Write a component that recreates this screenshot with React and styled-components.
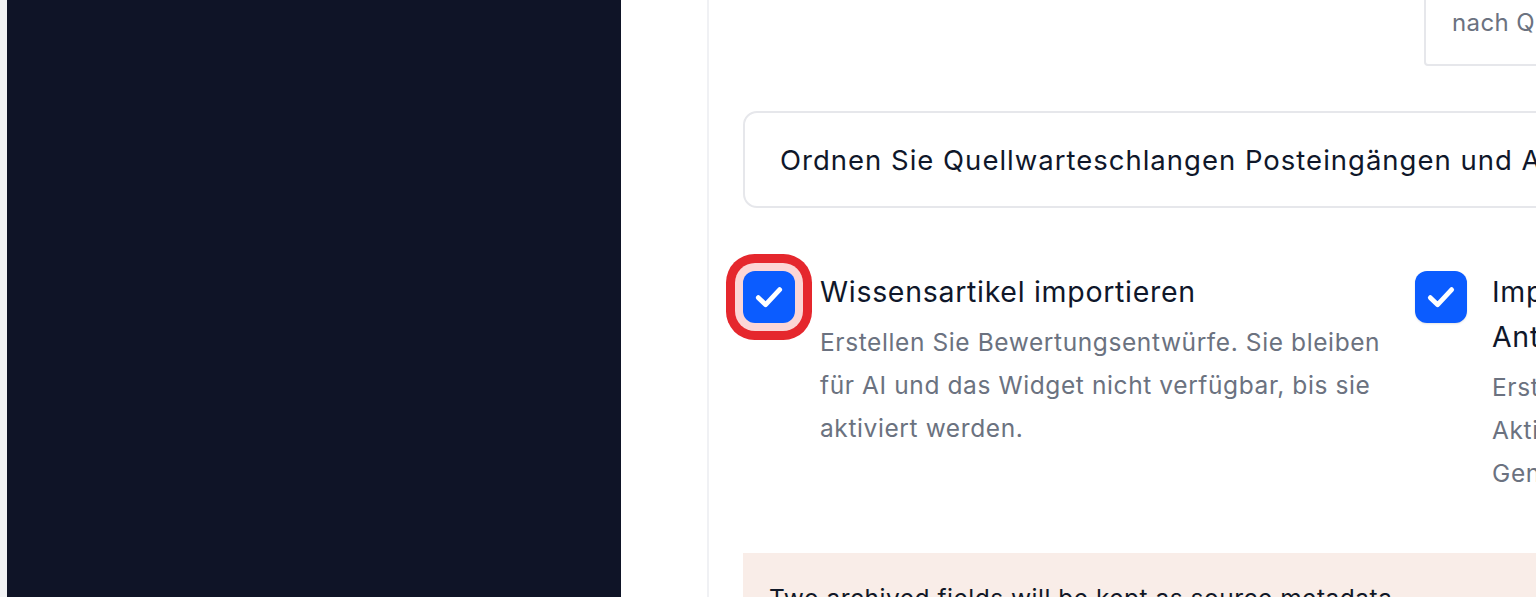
import React from 'react';
import styled, { createGlobalStyle } from 'styled-components';

const GlobalStyle = createGlobalStyle`
  html, body {
    margin: 0;
    padding: 0;
    height: 100%;
    overflow: hidden;
    background: #ffffff;
  }
  * { box-sizing: border-box; }
  body {
    font-family: Inter, "Noto Sans", "Liberation Sans", sans-serif;
  }
`;

const Page = styled.div`
  display: flex;
  height: 597px;
  overflow: hidden;
  background: #ffffff;
`;

const Gutter = styled.div`
  flex: 0 0 7px;
  background: #f1f2f4;
`;

const Sidebar = styled.aside`
  flex: 0 0 614px;
  background: #0f1427;
`;

const Main = styled.main`
  flex: 1;
  min-width: 0;
  display: flex;
  padding-left: 86px;
  background: #ffffff;
`;

const Panel = styled.section`
  flex: 1;
  min-width: 0;
  overflow: hidden;
  border-left: 2px solid #f0f1f4;
  padding-left: 34px;
`;

const Content = styled.div`
  width: 1400px;
`;

const Toolbar = styled.div`
  display: flex;
  justify-content: flex-end;
  margin-top: -22px;
`;

const SearchInput = styled.input`
  width: 719px;
  height: 88px;
  border: 2px solid #e6e7eb;
  border-radius: 0 0 0 4px;
  padding: 0 26px;
  font-family: inherit;
  font-size: 24px;
  letter-spacing: 0.4px;
  color: #111827;
  outline: none;
  &::placeholder { color: #6b7280; }
`;

const InfoCard = styled.div`
  margin-top: 45px;
  height: 97px;
  display: flex;
  align-items: center;
  padding: 0 35px;
  border: 2px solid #e6e7eb;
  border-radius: 14px;
  font-size: 27.5px;
  letter-spacing: 1px;
  color: #0f172a;
  white-space: nowrap;
`;

const OptionGrid = styled.div`
  margin-top: 61px;
  display: grid;
  grid-template-columns: 648px 648px;
  column-gap: 24px;
`;

const Option = styled.label`
  display: flex;
  align-items: flex-start;
  gap: 25px;
`;

const Checkbox = styled.span`
  flex: 0 0 52px;
  height: 52px;
  margin-top: 2px;
  border-radius: 12px;
  background: #0b5cff;
  display: flex;
  align-items: center;
  justify-content: center;
  box-shadow: ${(p) =>
    p.$focused
      ? '0 0 0 8px #fcd6d6, 0 0 0 17px #e5272d'
      : '0 1px 2px rgba(15, 23, 42, 0.12)'};
  svg { width: 40px; height: 40px; }
`;

const OptionText = styled.div`
  min-width: 0;
`;

const OptionTitle = styled.div`
  font-size: 28.5px;
  line-height: 45px;
  letter-spacing: 0.7px;
  color: #0f172a;
`;

const OptionDesc = styled.p`
  margin: 7px 0 0;
  font-size: 24.5px;
  line-height: 43px;
  letter-spacing: 0.6px;
  color: #6b7280;
`;

const Notice = styled.div`
  margin-top: 58px;
  background: #f9ede8;
  padding: 27px 26px;
  font-size: 24.5px;
  line-height: 36px;
  letter-spacing: 0.5px;
  color: #111827;
`;

const Check = () => (
  <svg viewBox="0 0 24 24" fill="none">
    <path
      d="M5.6 12.4 L10 16.6 L18.4 7.6"
      stroke="#ffffff"
      strokeWidth="2.9"
      strokeLinecap="round"
      strokeLinejoin="round"
    />
  </svg>
);

const options = [
  {
    title: 'Wissensartikel importieren',
    desc: 'Erstellen Sie Bewertungsentwürfe. Sie bleiben für AI und das Widget nicht verfügbar, bis sie aktiviert werden.',
    focused: true,
  },
  {
    title: 'Importieren Sie Makros als fertige Antworten',
    desc: 'Erstellen Sie Makroentwürfe aus Antworten. Aktivieren Sie diese vor der Nutzung. Generierte Makros bleiben privat.',
    focused: false,
  },
];

export default function App() {
  return (
    <>
      <GlobalStyle />
      <Page>
        <Gutter />
        <Sidebar />
        <Main>
          <Panel>
            <Content>
              <Toolbar>
                <SearchInput placeholder="nach Quellen suchen" />
              </Toolbar>
              <InfoCard>
                Ordnen Sie Quellwarteschlangen Posteingängen und Agenten zu, bevor Sie den Import starten.
              </InfoCard>
              <OptionGrid>
                {options.map((o) => (
                  <Option key={o.title}>
                    <Checkbox $focused={o.focused}>
                      <Check />
                    </Checkbox>
                    <OptionText>
                      <OptionTitle>{o.title}</OptionTitle>
                      <OptionDesc>{o.desc}</OptionDesc>
                    </OptionText>
                  </Option>
                ))}
              </OptionGrid>
              <Notice>Two archived fields will be kept as source metadata.</Notice>
            </Content>
          </Panel>
        </Main>
      </Page>
    </>
  );
}
